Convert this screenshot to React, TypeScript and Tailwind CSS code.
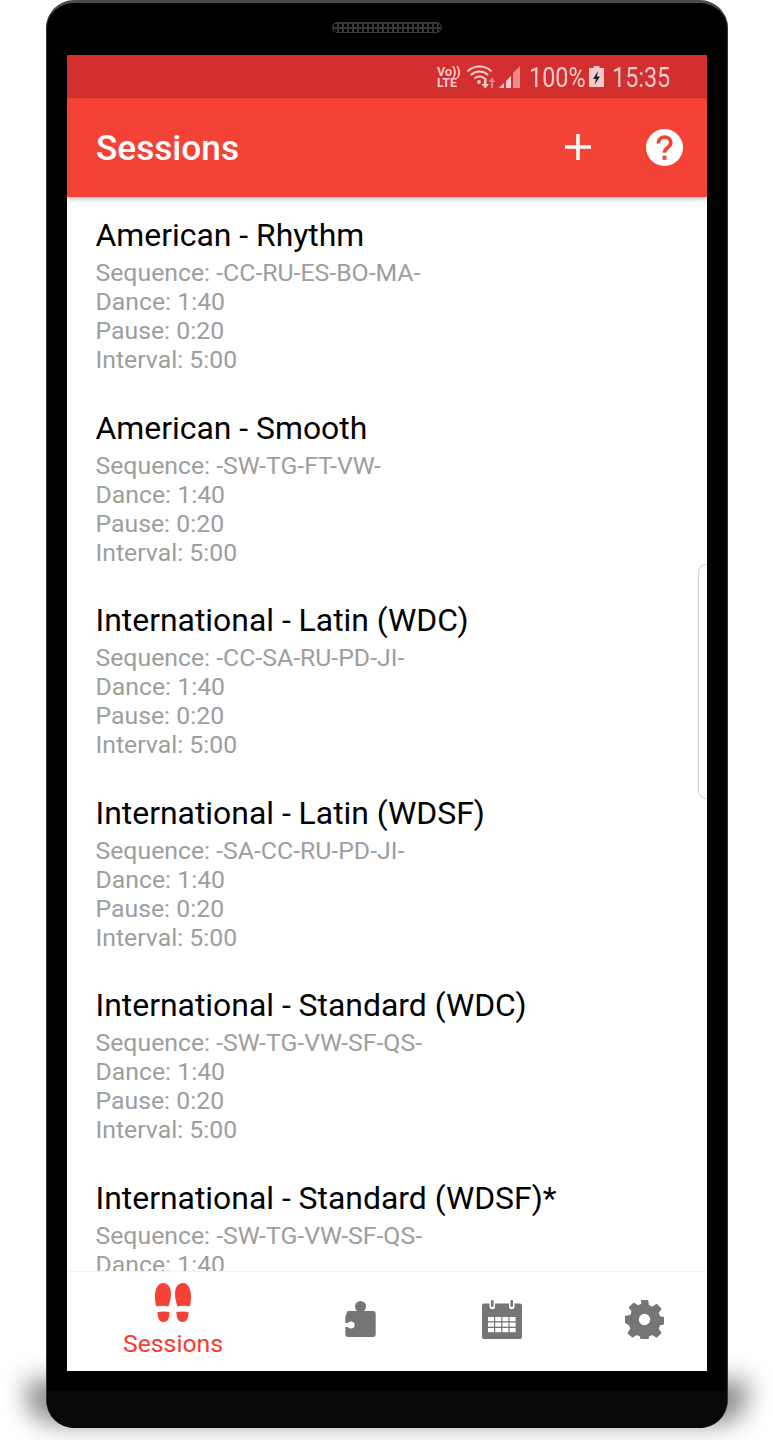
import React from 'react';

const sessions = [
  { title: 'American - Rhythm', sequence: '-CC-RU-ES-BO-MA-' },
  { title: 'American - Smooth', sequence: '-SW-TG-FT-VW-' },
  { title: 'International - Latin (WDC)', sequence: '-CC-SA-RU-PD-JI-' },
  { title: 'International - Latin (WDSF)', sequence: '-SA-CC-RU-PD-JI-' },
  { title: 'International - Standard (WDC)', sequence: '-SW-TG-VW-SF-QS-' },
  { title: 'International - Standard (WDSF)*', sequence: '-SW-TG-VW-SF-QS-' },
];

const StatusIcons = () => (
  <svg width="56" height="26" viewBox="0 0 56 26" className="text-[#f6cbcb]">
    {/* wifi */}
    <g fill="none" stroke="currentColor" strokeLinecap="round" strokeWidth="2">
      <path d="M2 7C8 1 19 1 25 7" />
      <path d="M5.500 10.500C10 6.500 17 6.500 21.500 10.500" />
      <path d="M9 14C11.500 12 15.500 12 18 14" />
    </g>
    <circle cx="13" cy="18" r="1.900" fill="currentColor" />
    <path d="M18 14h2.500v6h2.500l-3.700 4.500-3.800-4.500H18z" fill="currentColor" />
    <path d="M25 24v-6h-2.500l3.500-4.500 3.500 4.500H27v6z" fill="currentColor" opacity="0.55" />
    {/* signal */}
    <path d="M33 24l5-5v5z" fill="currentColor" />
    <path d="M40 24v-7l5-5v12z" fill="currentColor" />
    <path d="M47 24V9l7-7v22z" fill="currentColor" opacity="0.6" />
  </svg>
);

const Steps = () => (
  <svg width="36" height="40" viewBox="0 0 36 40" fill="#f44336">
    <path d="M8 0C3 0 0 6 0 13c0 5 .5 9 1.500 10.500C5 22.500 9 22.500 13.500 23.500 15 19 16 15 16 11 16 4 13 0 8 0z" />
    <path d="M28 0c5 0 8 6 8 13 0 5-.5 9-1.500 10.500C31 22.500 27 22.500 22.500 23.500 21 19 20 15 20 11 20 4 23 0 28 0z" />
    <path d="M2.500 29c4-.8 8-.8 12 0 0 6-1.500 10-6 10-4.500 0-6-4-6-10z" />
    <path d="M33.500 29c-4-.8-8-.8-12 0 0 6 1.500 10 6 10 4.500 0 6-4 6-10z" />
  </svg>
);

const Puzzle = () => (
  <svg width="33" height="36" viewBox="0 0 33 36">
    <circle cx="16.500" cy="5.500" r="5.500" fill="#757575" />
    <rect x="13.500" y="8" width="6" height="4" fill="#757575" />
    <path d="M3.500 10H29c1.500 0 2.700 1.200 2.700 2.700v20.600c0 1.500-1.200 2.700-2.700 2.700H4c-1.500 0-2.700-1.200-2.700-2.700V16z" fill="#757575" />
    <circle cx="7" cy="24" r="3.600" fill="#ffffff" />
    <rect x="0" y="22" width="7" height="4" fill="#ffffff" />
  </svg>
);

const Calendar = () => (
  <svg width="40" height="39" viewBox="0 0 40 39">
    <path d="M2 3.500h5.500V7c0 3 5.500 3 5.500 0V3.500h14V7c0 3 5.500 3 5.500 0V3.500H38c1 0 2 1 2 2V37c0 1-1 2-2 2H2c-1 0-2-1-2-2V5.500c0-1 1-2 2-2z" fill="#757575" />
    <rect x="9" y="0" width="2.500" height="7" rx="1.200" fill="#757575" />
    <rect x="28.500" y="0" width="2.500" height="7" rx="1.200" fill="#757575" />
    <g fill="#ffffff">
      {[17, 22.500, 28].map((y) =>
        [6, 13.200, 20.400, 27.600].map((x) => <rect key={`${x}-${y}`} x={x} y={y} width="6" height="4.200" />)
      )}
    </g>
  </svg>
);

const Gear = () => (
  <svg width="39" height="39" viewBox="0 0 24 24" fill="#757575">
    <path
      fillRule="evenodd"
      d="M9.800 0h4.400l.6 3.200c.7.2 1.300.5 1.900.9l2.800-1.800 3 3-1.800 2.800c.4.600.7 1.200.9 1.900l3.200.6v4.400l-3.200.6c-.2.700-.5 1.300-.9 1.900l1.800 2.800-3 3-2.800-1.800c-.6.400-1.200.7-1.900.9l-.6 3.200H9.800l-.6-3.200c-.7-.2-1.300-.5-1.900-.9l-2.800 1.800-3-3 1.800-2.800c-.4-.6-.7-1.200-.9-1.900L0 14.200V9.800l3.200-.6c.2-.7.5-1.300.9-1.900L2.300 4.500l3-3 2.800 1.800c.6-.4 1.200-.7 1.900-.9zM12 8.500a3.500 3.500 0 1 0 0 7 3.500 3.500 0 0 0 0-7z"
    />
  </svg>
);

export default function App() {
  return (
    <div
      className="relative h-[1440px] w-[773px] overflow-hidden bg-white"
      style={{ fontFamily: 'Roboto, sans-serif' }}
    >
      {/* shadow under the phone */}
      <div className="absolute left-[26px] top-[1380px] h-[44px] w-[722px] rounded-b-[30px] bg-black/45 blur-[12px]" />

      <div className="relative mx-[46px] flex h-[1428px] w-[682px] flex-col overflow-hidden rounded-[28px] border-x border-t-[3px] border-[#4a4a4a] border-x-[#333333] bg-black px-[20px]">
        {/* speaker */}
        <div className="flex h-[52px] shrink-0 items-start justify-center pt-[19px]">
          <div className="h-[11px] w-[110px] rounded-full border border-[#3c3c3c] bg-[#1a1a1a] bg-[radial-gradient(circle,#000000_1.500px,#363636_2px)] bg-[length:5px_5px]" />
        </div>

        <div className="relative flex h-[1316px] shrink-0 flex-col overflow-hidden bg-white">
          <div className="flex h-[43px] shrink-0 items-center justify-end bg-[#d32f2f] pr-[38px] text-[27px] leading-none text-[#f6cbcb]">
            <div className="mr-[8px] flex w-[21px] flex-col text-[12.500px] font-bold leading-[11px]">
              <span>Vo))</span>
              <span>LTE</span>
            </div>
            <div className="mr-[7px] flex">
              <StatusIcons />
            </div>
            <span className="w-[55px] origin-left scale-x-[0.865] whitespace-nowrap pt-[3px]">100%</span>
            <svg width="15" height="21" viewBox="0 0 15 21" className="ml-[5px] mr-[8px]">
              <path d="M4.500 0h6v2H14c.6 0 1 .4 1 1v17c0 .6-.4 1-1 1H1c-.6 0-1-.4-1-1V3c0-.6.4-1 1-1h3.500z" fill="#f6cbcb" />
              <path d="M9 5l-5 8h3l-1.500 6L11 10.500H8z" fill="#222222" />
            </svg>
            <span className="w-[57px] origin-left scale-x-[0.865] whitespace-nowrap pt-[3px]">15:35</span>
          </div>

          <div className="z-10 flex h-[99px] shrink-0 items-center bg-[#f44336] pl-[29px] shadow-[0_2px_5px_rgba(0,0,0,0.25)]">
            <h1 className="flex-1 pt-[3px] text-[35.200px] font-medium leading-none text-white">Sessions</h1>
            <svg width="26" height="26" viewBox="0 0 26 26" className="mb-[2px] mr-[55px]">
              <path d="M11.200 0h3.600v11.200H26v3.600H14.800V26h-3.600V14.800H0v-3.600h11.200z" fill="#ffffff" />
            </svg>
            <svg width="37" height="37" viewBox="0 0 36 36" className="mr-[24px]">
              <circle cx="18" cy="18" r="18" fill="#ffffff" />
              <path
                d="M12 14c0-3.700 2.500-6.200 6-6.200s6 2.300 6 5.500c0 4.700-6 5-6 9.700"
                fill="none"
                stroke="#f44336"
                strokeWidth="3.600"
              />
              <rect x="16.100" y="26" width="3.800" height="4" fill="#f44336" />
            </svg>
          </div>

          <div className="min-h-0 flex-1 overflow-hidden pl-[29px]">
            {sessions.map((s) => (
              <div key={s.title} className="h-[192.600px] pt-[18px]">
                <div className="-ml-[0.500px] text-[31.900px] leading-[40px] text-black">{s.title}</div>
                <div className="mt-[3px] -ml-[0.500px] text-[24.800px] leading-[29px] text-[#9e9e9e]">
                  <div>Sequence: {s.sequence}</div>
                  <div>Dance: 1:40</div>
                  <div>Pause: 0:20</div>
                  <div>Interval: 5:00</div>
                </div>
              </div>
            ))}
          </div>

          <div className="flex h-[100px] shrink-0 overflow-hidden border-t border-[#f3f3f3] bg-white">
            <div className="flex w-[212px] shrink-0 flex-col items-center pt-[11px]">
              <Steps />
              <span className="mt-[7px] text-[24.800px] leading-[28px] text-[#f73b2f]">Sessions</span>
            </div>
            <div className="ml-[10px] flex w-[142px] shrink-0 items-center justify-center pb-[5px]">
              <Puzzle />
            </div>
            <div className="flex w-[142px] shrink-0 items-center justify-center pb-[4px]">
              <Calendar />
            </div>
            <div className="flex w-[142px] shrink-0 items-center justify-center pb-[4px]">
              <Gear />
            </div>
          </div>

          {/* edge panel handle */}
          <div className="absolute right-0 top-[509px] h-[235px] w-[9px] rounded-l-[8px] border-y border-l border-[#d4d4d4] bg-white" />
        </div>

        {/* bottom bezel, slightly lighter band */}
        <div className="mt-[20px] -mx-[20px] min-h-0 flex-1 bg-[#080808]" />
      </div>
    </div>
  );
}
